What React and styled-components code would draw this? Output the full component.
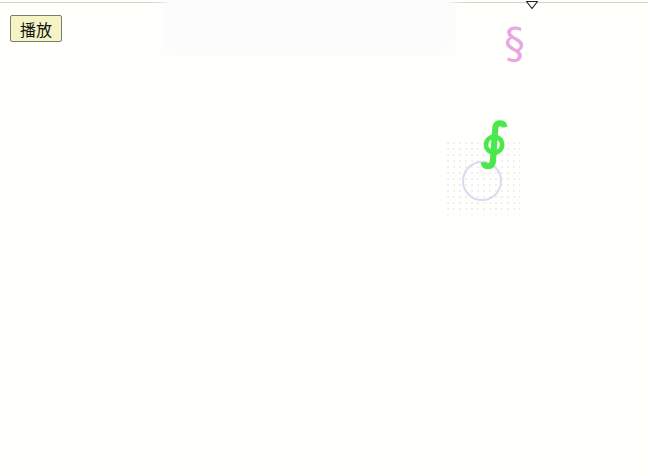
import React from "react";
import styled, { createGlobalStyle } from "styled-components";

const Global = createGlobalStyle`
  html, body { margin: 0; padding: 0; background: #fffffc; }
  #root { width: 648px; height: 476px; }
`;

const Stage = styled.div`
  position: relative;
  width: 648px;
  height: 476px;
  overflow: hidden;
  background: #fffffc;
  font-family: "Liberation Sans", "Noto Sans CJK SC", sans-serif;
`;

const Track = styled.div`
  position: absolute;
  left: 0;
  right: 0;
  top: 2px;
  height: 1px;
  background: #d2d2c6;
`;

const Glow = styled.div`
  position: absolute;
  left: 170px;
  top: 0;
  width: 278px;
  height: 48px;
  background: #fcfcfd;
  box-shadow: 0 0 12px 8px #fcfcfd;
`;

const Marker = styled.svg`
  position: absolute;
  left: 525px;
  top: 0;
`;

const Toolbar = styled.div`
  position: relative;
  display: flex;
  padding: 15px 0 0 10px;
`;

const PlayButton = styled.button`
  height: 27px;
  padding: 0 9px;
  font-family: "Noto Sans CJK SC", sans-serif;
  font-size: 16px;
  line-height: 1;
  color: #111;
  background: #f4f4c4;
  border: 1px solid #7a7a70;
  border-radius: 2px;
`;

const Glyph = styled.span`
  position: absolute;
  left: ${(p) => p.$x}px;
  top: ${(p) => p.$y}px;
  font-family: "DejaVu Sans", sans-serif;
  font-size: ${(p) => p.$size}px;
  font-weight: ${(p) => p.$weight || 400};
  color: ${(p) => p.$color};
  line-height: 1;
`;

const Dots = styled.div`
  position: absolute;
  left: 445px;
  top: 140px;
  width: 75px;
  height: 75px;
  background-image: radial-gradient(#efeef7 1px, transparent 1.2px);
  background-size: 6px 6px;
`;

const Ring = styled.svg`
  position: absolute;
  left: 460px;
  top: 159px;
`;

export default function App() {
  return (
    <Stage>
      <Global />
      <Track />
      <Glow />
      <Marker width="14" height="10" viewBox="0 0 14 10">
        <path d="M1.5 1.5 L12.5 1.5 L7 8.5 Z" fill="#fff" stroke="#222" strokeWidth="1.2" strokeLinejoin="round" />
      </Marker>
      <Toolbar>
        <PlayButton>播放</PlayButton>
      </Toolbar>
      <Dots />
      <Ring width="44" height="44" viewBox="0 0 44 44">
        <circle cx="22" cy="22" r="19" fill="none" stroke="#dcd9f0" strokeWidth="2" />
      </Ring>
      <Glyph $x={504} $y={23} $size={42} $color="#eaa6e2">§</Glyph>
      <Glyph $x={480} $y={116} $size={50} $weight={700} $color="#4ae84a">∮</Glyph>
    </Stage>
  );
}
